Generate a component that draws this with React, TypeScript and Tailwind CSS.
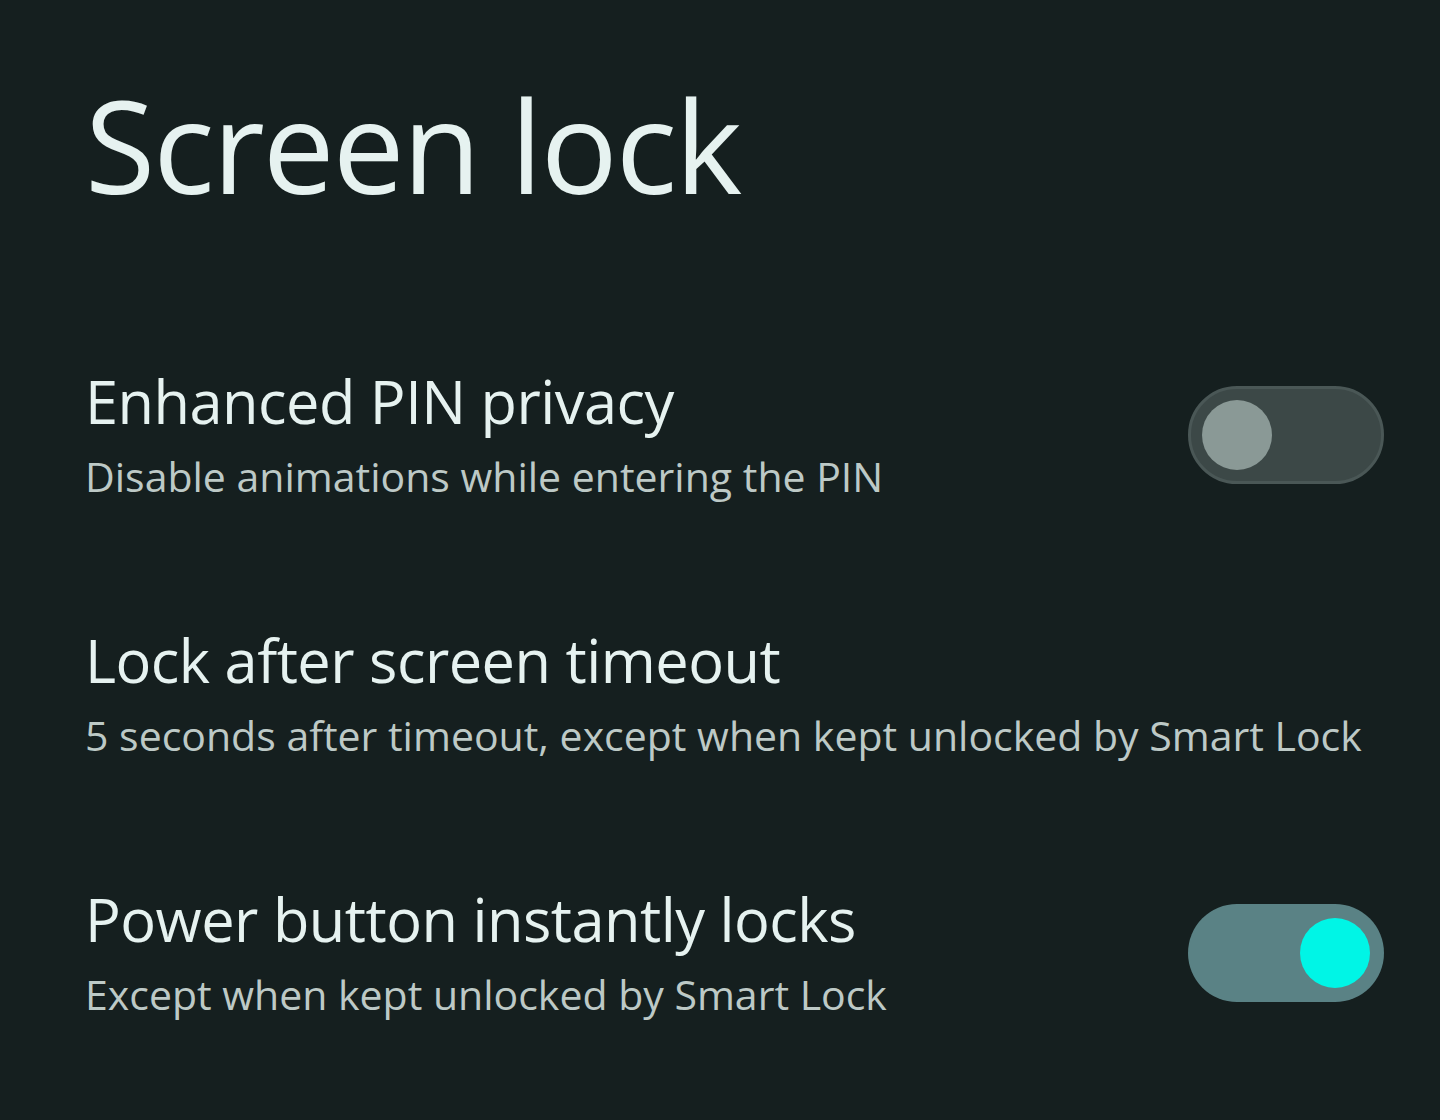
import { useState } from 'react';

interface Setting {
  id: string;
  title: string;
  summary: string;
  toggle?: boolean;
}

const settings: Setting[] = [
  { id: 'pin', title: 'Enhanced PIN privacy', summary: 'Disable animations while entering the PIN', toggle: false },
  { id: 'timeout', title: 'Lock after screen timeout', summary: '5 seconds after timeout, except when kept unlocked by Smart Lock' },
  { id: 'power', title: 'Power button instantly locks', summary: 'Except when kept unlocked by Smart Lock', toggle: true },
];

function Toggle({ on, onChange }: { on: boolean; onChange: () => void }) {
  return (
    <button
      onClick={onChange}
      className={`w-[196px] h-[98px] rounded-full flex items-center shrink-0 ${
        on ? 'bg-[#5a8285] justify-end px-[14px]' : 'bg-[#3c4847] border-[3px] border-[#4a5756] justify-start px-[11px]'
      }`}
    >
      <span className={`w-[70px] h-[70px] rounded-full ${on ? 'bg-[#00f5e6]' : 'bg-[#8a9996]'}`} />
    </button>
  );
}

export default function App() {
  const [values, setValues] = useState<Record<string, boolean>>({ pin: false, power: true });

  return (
    <div className="min-h-screen w-[1440px] h-[1120px] bg-[#151f1f] pl-[85px] pr-[56px] overflow-hidden" style={{ fontFamily: '"Open Sans", sans-serif' }}>
      {/* Header */}
      <h1 className="text-[128px] leading-none text-[#e6f2f0] pt-[81px] tracking-[-2px]">Screen lock</h1>

      {/* Settings list */}
      <div className="mt-[156px] flex flex-col gap-[120px]">
        {settings.map((s) => (
          <div key={s.id} className="flex items-center justify-between">
            <div>
              <div className="text-[59.5px] leading-[72px] text-[#e6f2f0] tracking-[-0.5px]">{s.title}</div>
              <div className="mt-[11px] text-[41px] leading-[56px] text-[#bdc9c6]">{s.summary}</div>
            </div>
            {s.toggle !== undefined && (
              <Toggle on={values[s.id]} onChange={() => setValues({ ...values, [s.id]: !values[s.id] })} />
            )}
          </div>
        ))}
      </div>
    </div>
  );
}
